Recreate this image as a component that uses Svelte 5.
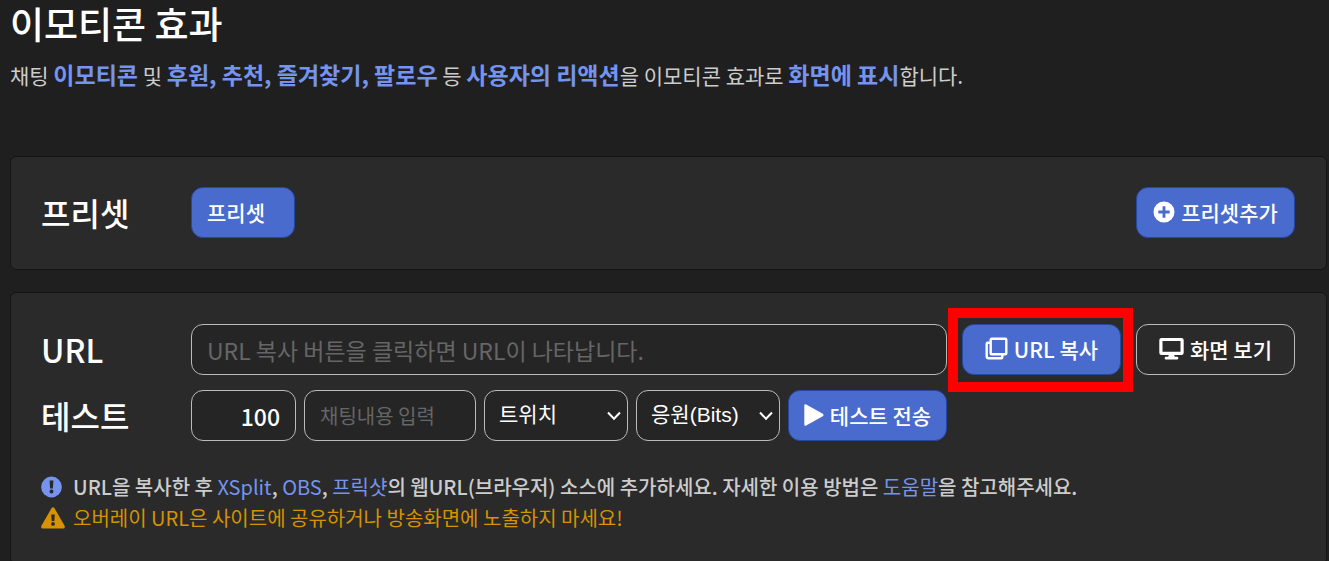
<script>
  let amount = $state("100");
  let message = $state("");
  let platform = $state("twitch");
  let action = $state("bits");
  let overlayUrl = $state("");
</script>

{#snippet arrow()}
  <svg class="arrow" width="14" height="10" viewBox="0 0 14 10" fill="none" stroke="currentColor" stroke-width="2" aria-hidden="true">
    <path d="M1 1.500 7 7.800 13 1.500" />
  </svg>
{/snippet}

<main>
  <header>
    <h1>이모티콘 효과</h1>
    <p>
      채팅 <strong>이모티콘</strong> 및 <strong>후원, 추천, 즐겨찾기, 팔로우</strong> 등
      <strong>사용자의 리액션</strong>을 이모티콘 효과로 <strong>화면에 표시</strong>합니다.
    </p>
  </header>

  <section class="panel presets">
    <h2>프리셋</h2>
    <button class="btn primary preset">프리셋</button>
    <button class="btn primary add">
      <svg width="22" height="22" viewBox="0 0 22 22" aria-hidden="true">
        <path fill="currentColor" fill-rule="evenodd" d="M11 .5a10.5 10.5 0 1 0 0 21 10.5 10.5 0 0 0 0-21ZM9.6 5.3h2.8v4.3h4.3v2.8h-4.3v4.3h-2.8v-4.3h-4.3v-2.8h4.3Z" />
      </svg>
      프리셋추가
    </button>
  </section>

  <section class="panel">
    <div class="controls">
      <label class="title" for="overlay-url">URL</label>
      <input
        id="overlay-url"
        class="url"
        type="text"
        readonly
        bind:value={overlayUrl}
        placeholder="URL 복사 버튼을 클릭하면 URL이 나타납니다."
      />
      <div class="highlight">
        <button class="btn primary">
          <svg width="23" height="23" viewBox="0 0 23 23" fill="none" stroke="currentColor" stroke-width="2.4" stroke-linejoin="round" stroke-linecap="round" aria-hidden="true">
            <rect x="5.7" y="1.7" width="15.6" height="15.6" rx="1" />
            <path d="M5 5.7H2.7a1 1 0 0 0-1 1V19.3a2 2 0 0 0 2 2H16.3a1 1 0 0 0 1-1V18" />
          </svg>
          URL 복사
        </button>
      </div>
      <button class="btn outline">
        <svg width="25" height="23" viewBox="0 0 25 23" aria-hidden="true">
          <path fill="currentColor" fill-rule="evenodd" d="M2.500 1h20A2.200 2.200 0 0 1 24.700 3.200V15.800a2.200 2.200 0 0 1-2.200 2.200H15.200l.6 1.800h2.200a1.200 1.200 0 0 1 0 2.700H7a1.200 1.200 0 0 1 0-2.700h2.200L9.800 18H2.500A2.200 2.200 0 0 1 .3 15.800V3.200A2.200 2.200 0 0 1 2.500 1ZM3.500 4v10.800h18V4Z" />
        </svg>
        화면 보기
      </button>

      <label class="title" for="amount">테스트</label>
      <div class="test">
        <input id="amount" class="amount" type="text" inputmode="numeric" bind:value={amount} />
        <input class="message" type="text" aria-label="채팅내용" bind:value={message} placeholder="채팅내용 입력" />
        <div class="select">
          <select aria-label="플랫폼" bind:value={platform}>
            <option value="twitch">트위치</option>
          </select>
          {@render arrow()}
        </div>
        <div class="select">
          <select aria-label="종류" bind:value={action}>
            <option value="bits">응원(Bits)</option>
          </select>
          {@render arrow()}
        </div>
        <button class="btn primary">
          <svg width="20" height="22" viewBox="0 0 20 22" aria-hidden="true">
            <path fill="currentColor" d="M.3 1.600Q.3-.5 2.200.4L18.800 9.800Q20.300 11 18.800 12.200L2.200 21.600Q.3 22.500.3 20.400Z" />
          </svg>
          테스트 전송
        </button>
      </div>
    </div>

    <ul class="notes">
      <li class="info">
        <svg width="24" height="22" viewBox="0 0 24 22" aria-hidden="true">
          <circle cx="10.500" cy="11" r="10.400" fill="#7594ee" />
          <path fill="#2a2a2a" d="M8.600 4.500h3.800l-.5 8H9.100ZM10.500 13.500a2 2 0 1 1 0 4 2 2 0 0 1 0-4Z" />
        </svg>
        <span>
          URL을 복사한 후 <a href="#xsplit">XSplit</a>, <a href="#obs">OBS</a>, <a href="#freecshot">프릭샷</a>의
          웹URL(브라우저) 소스에 추가하세요. 자세한 이용 방법은 <a href="#help">도움말</a>을 참고해주세요.
        </span>
      </li>
      <li class="warning">
        <svg width="24" height="22" viewBox="0 0 24 22" aria-hidden="true">
          <path fill="currentColor" d="M10.500 1.200Q12 -.8 13.500 1.200L23.600 18.800Q24.500 21.500 22 21.600H2Q-.5 21.500.4 18.800Z" />
          <path fill="#2a2a2a" d="M10.200 7.500h3.600l-.5 6.500h-2.600ZM12 15a1.900 1.900 0 1 1 0 3.800 1.900 1.900 0 0 1 0-3.800Z" />
        </svg>
        <span>오버레이 URL은 사이트에 공유하거나 방송화면에 노출하지 마세요!</span>
      </li>
    </ul>
  </section>
</main>

<style>
  :global(body) {
    background: #1f1f1f;
  }

  main {
    padding: 0 2px 0 10px;
    color: #fff;
    font-family: "Noto Sans CJK KR", sans-serif;
  }

  h1,
  h2,
  p,
  ul {
    margin: 0;
  }

  header {
    padding-bottom: 61px;
  }

  h1 {
    font-size: 37px;
    font-weight: 500;
    line-height: 46px;
  }

  p {
    margin-top: 8px;
    color: #ccc;
    font-size: 21px;
    line-height: 40px;
  }

  strong {
    color: #7594ee;
    font-size: 23px;
    font-weight: 700;
  }

  .panel {
    padding: 31px 31px 30px 30px;
    border: 1px solid #141414;
    border-radius: 6px;
    background: #2a2a2a;
  }

  .panel + .panel {
    margin-top: 22px;
  }

  .presets {
    display: flex;
    align-items: center;
    padding: 30px 31px 31px 30px;
  }

  h2,
  .title {
    font-size: 32px;
    font-weight: 500;
    line-height: 51px;
  }

  h2 {
    width: 150px;
  }

  .btn {
    display: flex;
    align-items: center;
    justify-content: center;
    gap: 6px;
    box-sizing: border-box;
    width: 159px;
    height: 51px;
    padding: 0 0 2px;
    border: 1px solid #2748a0;
    border-radius: 12px;
    color: #fff;
    font-family: inherit;
    font-size: 21px;
    font-weight: 500;
    cursor: pointer;
  }

  .primary {
    background: #4a6bce;
  }

  .outline {
    border-color: #bbb;
    background: transparent;
  }

  .preset {
    justify-content: flex-start;
    width: 104px;
    padding-left: 15px;
  }

  .add {
    margin-left: auto;
  }

  .controls {
    display: grid;
    grid-template-columns: 135px minmax(0, 1fr) 159px 159px;
    gap: 15px;
  }

  .highlight {
    position: relative;
  }

  .highlight::after {
    content: "";
    position: absolute;
    inset: -16px -12px -17px -14px;
    border: 10px solid #f00;
    pointer-events: none;
  }

  .test {
    display: flex;
    gap: 8px;
  }

  input,
  select {
    box-sizing: border-box;
    min-width: 0;
    height: 51px;
    padding: 0 15px;
    border: 1px solid #bbb;
    border-radius: 12px;
    background: #252525;
    color: #fff;
    font-family: inherit;
    font-size: 20px;
  }

  input::placeholder {
    color: #666;
  }

  .url {
    font-size: 23px;
  }

  .amount {
    width: 105px;
    font-size: 23px;
    font-weight: 500;
    text-align: right;
  }

  .message {
    flex: 1;
  }

  .select {
    position: relative;
    width: 144px;
  }

  select {
    width: 100%;
    padding: 0 24px 2px 14px;
    appearance: none;
    font-family: "Liberation Sans", "Noto Sans CJK KR", sans-serif;
    font-size: 21px;
  }

  .arrow {
    position: absolute;
    top: 21px;
    right: 7px;
    pointer-events: none;
  }

  .notes {
    margin-top: 30px;
    padding: 0;
    color: #ccc;
    font-size: 20px;
    line-height: 31px;
    list-style: none;
  }

  .notes li {
    display: flex;
    align-items: center;
    gap: 8px;
  }

  .info {
    font-weight: 500;
  }

  a {
    color: #7594ee;
    font-weight: 400;
    text-decoration: none;
  }

  .warning {
    color: #d69200;
  }

  svg {
    flex: none;
  }
</style>
